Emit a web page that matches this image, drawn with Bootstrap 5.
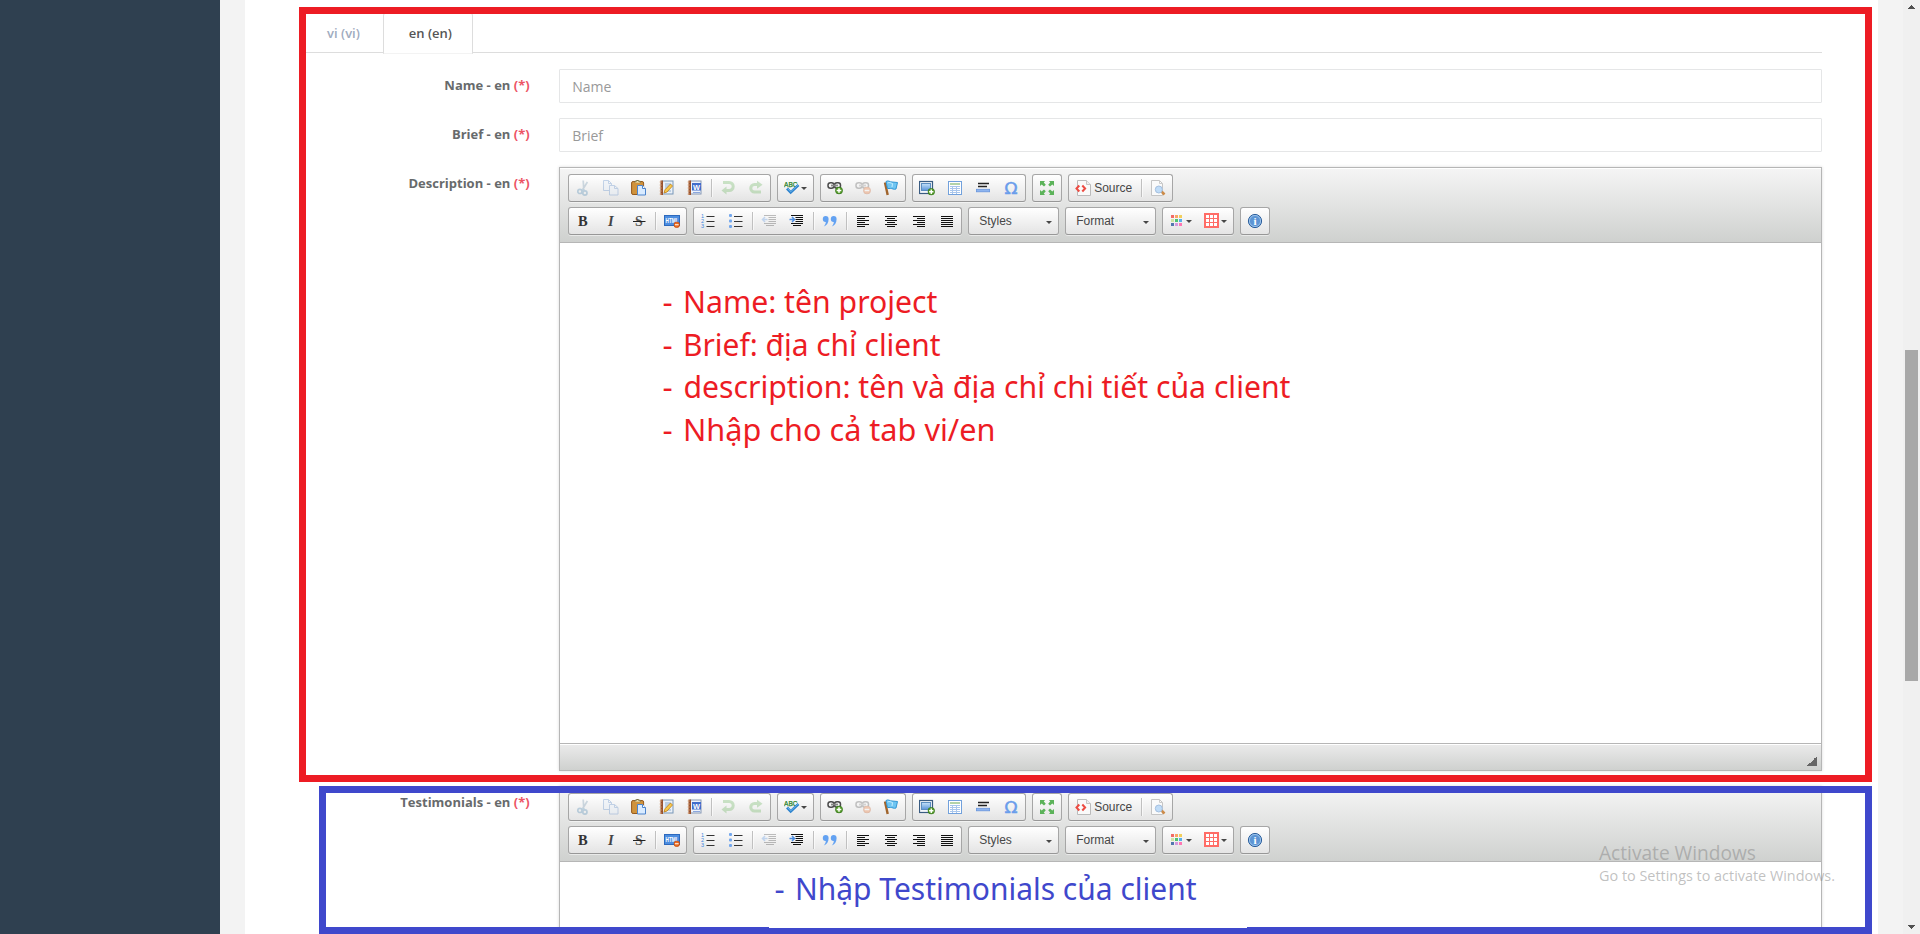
<!DOCTYPE html>
<html lang="vi">
<head>
<meta charset="utf-8">
<title>Project form</title>
<link href="https://cdn.jsdelivr.net/npm/bootstrap@5.3.0/dist/css/bootstrap.min.css" rel="stylesheet">
<style>
html{height:934px;overflow:hidden}
body{height:934px;overflow:hidden;background:#f3f3f3;font:13px/1.42857 "Open Sans",sans-serif;color:#676a6c}
.side{width:220px;background:#2f4050}
main{height:934px;overflow:hidden}
.panel-box{margin:0 25px;background:#fff;padding:12px 41px 0 40.6px;overflow:hidden}
.nav-tabs{height:41px;margin:0 15px;padding-left:.5px;border-bottom:1px solid #ddd}
.nav-tabs .nav-link{padding:10px 20px 10px 25px;margin-right:2px;margin-bottom:-1px;border:1px solid transparent;border-radius:4px 4px 0 0;font-weight:600;line-height:20px;color:#a0abc0}
.nav-tabs .nav-link.active{color:#555;background:#fff;border-color:#ddd #ddd #f3f3f3}
.form-rows{padding-top:16px}
.form-rows .row{--bs-gutter-x:30px;margin-left:0;margin-right:0;margin-bottom:15px}
.form-rows label{padding-top:7px;padding-right:14.500px;font-weight:700;text-align:right}
.req{color:#ed5565}
.form-control{height:34px;border:1px solid #e5e6e7;border-radius:1px;padding:6px 12px;font-size:14px;line-height:20px}
.form-control::placeholder{color:#999}
.editor{border:1px solid #b6b6b6;box-shadow:0 0 3px rgba(0,0,0,.15);background:#fff}
.ed-top{height:75px;padding:6px 0 0 8px;border-bottom:1px solid #b6b6b6;background:linear-gradient(#f5f5f5,#cfd1cf);box-shadow:0 1px 0 #fff inset}
.ed-row{gap:6px;margin-bottom:5px}
.grp{height:28px;border:1px solid #a6a6a6;border-bottom-color:#979797;border-radius:3px;background:linear-gradient(#fff,#e4e4e4);box-shadow:0 1px 0 rgba(255,255,255,.5),0 0 2px rgba(255,255,255,.15) inset;font:12px/18px "Liberation Sans",Arial,sans-serif;color:#474747}
.tb{height:26px;padding:4px 6px;color:#474747}
.tb svg{width:16px;height:16px;margin-top:1px;flex:none}
.tb.off svg{opacity:.3}
.tb span{margin-left:3px;width:39px}
.sep{width:1px;height:18px;margin:4px 2px 0;background:#c0c0c0;box-shadow:1px 0 0 rgba(255,255,255,.6)}
.caret{width:0;height:0;border:3px solid transparent;border-top-color:#474747;border-bottom:0;margin:8px 0 0 1px}
.combo{width:91px;padding:4px 6px 0 10px}
.combo .caret{margin:9px 0 0 auto}
.ed-body{height:500px}
.ed-body.cut-off{height:90px}
.ed-foot{height:27px;border-top:1px solid #b6b6b6;background:linear-gradient(#ebebeb,#cfd1cf);box-shadow:0 1px 0 #fff inset}
.grip{width:10px;height:10px;margin:0 4px 4px 0;background:linear-gradient(135deg,transparent 50%,#666 50%)}
.scrollcol{width:17px;height:934px;background:#f0f0f0;padding:5px 2px}
.thumb{height:331px;margin-top:341px;width:13px;background:#a8a8a8}
.mark-red,.mark-blue{position:absolute;border:7px solid #ed1c24}
.mark-red{left:299px;top:7px;width:1573px;height:775px}
.mark-blue{left:319px;top:786px;width:1553px;height:148px;border-color:#3f48cc}
.patch{position:absolute;left:769px;top:926px;width:478px;height:2px;background:#fff}
.notes{position:absolute;left:0;top:0;font-family:"Noto Sans","Open Sans",sans-serif;pointer-events:none}
</style>
</head>
<body class="d-flex position-relative">
<svg width="0" height="0" class="position-absolute">
<defs>
<linearGradient id="gb" x2="0" y2="1"><stop stop-color="#c5e2fb"/><stop offset="1" stop-color="#5b94d8"/></linearGradient>
<symbol id="cut" viewBox="0 0 16 16"><g fill="none" stroke="#3f7fae" transform="translate(.7)"><path d="M7.5.5 8 8.5M11.7 2 7 9.5" stroke="#6a8da8" stroke-width="1.7"/><circle cx="4.2" cy="11.4" r="2.1" stroke-width="1.7"/><circle cx="9.2" cy="13" r="2.1" stroke-width="1.7"/><path d="M6 10.3 9 9.8" stroke-width="1.5"/></g></symbol>
<symbol id="copy" viewBox="0 0 16 16"><g fill="#e3eefb" stroke="#4a7fc4"><path d="M.5.5h5l3 3v7h-8zM5.5.5v3h3"/><path d="M6.500 5.500h5l3.500 3v6.500H6.500zM11.500 5.500v3H15"/></g></symbol>
<symbol id="paste" viewBox="0 0 16 16"><rect x=".6" y="1.500" width="12" height="13" rx="1.500" fill="#d0933c" stroke="#94591c"/><path d="M4 2.500V1.200h1.500V.5h2v.7H9.200v1.600" fill="#eee6b5" stroke="#777145"/><path d="M6.500 5.500h5l3 3V15h-8z" fill="#d9ebff" stroke="#4c84cd"/><path d="M11.500 5.500v3h3" fill="#fff" stroke="#4c84cd"/></symbol>
<symbol id="ptext" viewBox="0 0 16 16"><rect x="3.500" y="1" width="10.500" height="13" fill="#eaf0f7" stroke="#7897b8"/><path d="M6 4h6M6 6h6M6 8h4M6 11h6" stroke="#8eaed0"/><path d="M1.500.5h2.500v14.500H1.500z" fill="#98522f"/><path d="M.7 2h2M.7 5h2M.7 8h2M.7 11h2M.7 14h2" stroke="#d79d70"/><path d="m5 13 1-3.200L11.500 4l2 2L8 12z" fill="#f8ca4b" stroke="#bd7b17" stroke-width=".8"/></symbol>
<symbol id="pword" viewBox="0 0 16 16"><rect x="3.500" y="1" width="10.500" height="13" fill="#eef3fb" stroke="#8698b5"/><path d="M1.500.5h2.500v14.500H1.500z" fill="#98522f"/><path d="M.7 2h2M.7 5h2M.7 8h2M.7 11h2M.7 14h2" stroke="#d79d70"/><rect x="5" y="3" width="9" height="7.500" fill="#416dcb"/><text x="6" y="9.500" font-family="Liberation Sans" font-weight="700" font-size="7.500" textLength="7" lengthAdjust="spacingAndGlyphs" fill="#fff">W</text><path d="M6 12.500h7" stroke="#8ba6dd"/></symbol>
<symbol id="undo" viewBox="0 0 16 16"><path d="M3 2.500h6.200a3.400 3.400 0 1 1 0 8H5" fill="none" stroke="#60b052" stroke-width="3"/><path d="M6.500 6.500v8L1.500 10.500z" fill="#60b052"/></symbol>
<symbol id="redo" viewBox="0 0 16 16"><path d="M13 12H6.500a3.700 3.700 0 0 1 0-7.500H10" fill="none" stroke="#60b052" stroke-width="3"/><path d="M9 .7v8l5.500-4z" fill="#60b052"/></symbol>
<symbol id="spell" viewBox="0 0 16 16"><text x="0" y="6.500" font-family="Liberation Sans" font-size="7" textLength="13.500" lengthAdjust="spacingAndGlyphs" fill="#258127" stroke="#258127" stroke-width=".25">ABC</text><path d="m3 8.500 3.700 4L14.500 5" fill="none" stroke="#2e83ce" stroke-width="2.600"/><path d="m3.500 8.500 3.200 3.300L14 5" fill="none" stroke="#75bdf0" stroke-width=".8"/></symbol>
<symbol id="chain" viewBox="0 0 16 16"><g fill="none" stroke="#4b4b4b" stroke-width="1.500"><rect x="1" y="2.800" width="6" height="5.500" rx="2.500"/><rect x="7.500" y="2.800" width="6" height="5.500" rx="2.500"/><path d="M4 5.500h7" stroke="#888" stroke-width="1.800"/></g></symbol>
<symbol id="plus" viewBox="0 0 8 8"><circle cx="4" cy="4" r="3.500" fill="#5b9f2e" stroke="#33761b" stroke-width=".8"/><path d="M4 1.700v4.600M1.700 4h4.600" stroke="#fff" stroke-width="1.500"/></symbol>
<symbol id="minus" viewBox="0 0 8 8"><circle cx="4" cy="4" r="3.500" fill="#ed6b20" stroke="#b74209" stroke-width=".8"/><path d="M1.700 4h4.600" stroke="#fff" stroke-width="1.500"/></symbol>
<symbol id="link" viewBox="0 0 16 16"><use href="#chain" width="16" height="16"/><use href="#plus" x="8" y="6.500" width="8" height="8"/></symbol>
<symbol id="unlink" viewBox="0 0 16 16"><use href="#chain" width="16" height="16"/><use href="#minus" x="8" y="6.500" width="8" height="8"/></symbol>
<symbol id="flag" viewBox="0 0 16 16"><path d="M2 2.500 4.700 15" stroke="#a0642c" stroke-width="2.400"/><path d="M3 1.500c2-1.500 4 .5 6 .5l5.500.5L13 9c-2 1-4-.8-5.500-.5L4.500 8.500z" fill="#6fc5f2" stroke="#3397d4"/><path d="M4.500 3c2-1 3 0 5 .5L9 7" fill="none" stroke="#c7efff"/></symbol>
<symbol id="image" viewBox="0 0 16 16"><rect x=".5" y="1.500" width="13" height="12" fill="#f3f7fb" stroke="#3a5c82" stroke-width="1.200"/><rect x="2.500" y="3.500" width="9" height="7" fill="url(#gb)" stroke="#5c8dbf"/><use href="#plus" x="8.500" y="8" width="7.500" height="7.500"/></symbol>
<symbol id="table" viewBox="0 0 16 16"><rect x="1.500" y="1.500" width="13" height="13" fill="#fff" stroke="#72a1dc"/><path d="M3 4h10" stroke="#9ac58d" stroke-width="1.500"/><path d="M3 6.500h10M3 8.500h10M3 10.500h10M3 12.500h10M5.500 6v8M9.500 6v8" stroke="#a9c6ec"/></symbol>
<symbol id="hr" viewBox="0 0 16 16"><path d="M3 3.500h11M3 6.500h9" stroke="#222" stroke-width="1.300"/><rect x="1.400" y="9.300" width="13.200" height="2.500" fill="#8db4ef" stroke="#6895dc" stroke-width=".8"/></symbol>
<symbol id="omega" viewBox="0 0 16 16"><text x="1.500" y="13.500" font-family="DejaVu Sans" font-size="16" textLength="13" lengthAdjust="spacingAndGlyphs" fill="#6a9deb" stroke="#6a9deb" stroke-width=".5">Ω</text></symbol>
<symbol id="max" viewBox="0 0 16 16"><g fill="#5cb35a"><path d="M1 1h5L4.800 2.600 6.800 4.700 5 6.500 2.700 4.600 1 6zM15 1h-5l1.200 1.600-2 2.100L11 6.500l2.300-1.900L15 6zM1 15h5l-1.200-1.600 2-2.100L5 9.500l-2.300 1.900L1 10zM15 15h-5l1.200-1.600-2-2.100L11 9.500l2.300 1.900L15 10z"/></g></symbol>
<symbol id="source" viewBox="0 0 16 16"><path d="M2.500.5h9l4 4v11h-13z" fill="#fafafa" stroke="#bbb"/><path d="M11.500.5v4h4" fill="#eee" stroke="#c5c5c5"/><path d="M4.300 5.500 1.500 8.500l2.800 3M7.300 5.500l2.800 3-2.800 3" fill="none" stroke="#ed4b42" stroke-width="2"/></symbol>
<symbol id="preview" viewBox="0 0 16 16"><path d="M1.500.5h8l3 3v12h-11z" fill="#fafafa" stroke="#c5c5c5"/><path d="M9.500.5v3h3" fill="none" stroke="#ccc"/><path d="m11.500 11.500 3 3" stroke="#cd8b48" stroke-width="2.500"/><circle cx="8.800" cy="9.500" r="3.500" fill="#c0dcf7" stroke="#a4bfdf"/></symbol>
<symbol id="bold" viewBox="0 0 16 16"><text x="3" y="13" font-family="Liberation Serif" font-weight="700" font-size="14.500" fill="#333">B</text></symbol>
<symbol id="italic" viewBox="0 0 16 16"><text x="5" y="13" font-family="Liberation Serif" font-weight="700" font-style="italic" font-size="14.500" fill="#444">I</text></symbol>
<symbol id="strike" viewBox="0 0 16 16"><text x="4" y="13" font-family="Liberation Serif" font-weight="700" font-size="14" fill="#555">S</text><path d="M2 8.500h12.500" stroke="#222"/></symbol>
<symbol id="clean" viewBox="0 0 16 16"><rect x=".5" y="2.500" width="15" height="10" fill="#4c8de0" stroke="#2d69bd"/><text x="1.500" y="9.800" font-family="Liberation Sans" font-weight="700" font-size="6.500" textLength="13" lengthAdjust="spacingAndGlyphs" fill="#fff">HTML</text><use href="#minus" x="9.500" y="8.500" width="6.500" height="6.500"/></symbol>
<symbol id="ol" viewBox="0 0 16 16"><g font-family="Liberation Sans" font-size="5.500" fill="#3e86dd"><text x="1" y="5">1</text><text x="1" y="10">2</text><text x="1" y="15">3</text></g><path d="M6.500 3.500h8M6.500 8.500h8M6.500 13.500h8" stroke="#333"/></symbol>
<symbol id="ul" viewBox="0 0 16 16"><g fill="#73a7ed"><rect x="1" y="1" width="3" height="3" rx="1"/><rect x="1" y="6.500" width="3" height="3" rx="1"/><rect x="1" y="12" width="3" height="3" rx="1"/></g><path d="M6 3.500h8.500M6 8.500h8.500M6 13.500h8.500" stroke="#333"/></symbol>
<symbol id="out" viewBox="0 0 16 16"><path d="M3 2.500h12M7.500 4.500h7.500M7.500 6.500h7.500M7.500 8.500h7.500M3 10.500h12M5 12.500h8" stroke="#333"/><path d="M1.500 6.500h5M4 4 1.500 6.500 4 9" fill="none" stroke="#4e8ee1" stroke-width="1.500"/></symbol>
<symbol id="ind" viewBox="0 0 16 16"><path d="M2 2.500h12M6.500 4.500H14M6.500 6.500H14M6.500 8.500H14M2 10.500h12M4 12.500h8" stroke="#111"/><path d="M.5 6.500h5M3 4l2.500 2.500L3 9" fill="none" stroke="#4e8ee1" stroke-width="1.500"/></symbol>
<symbol id="quote" viewBox="0 0 16 16"><g fill="#63a2f2"><path id="q" d="M.8 6a2.800 2.800 0 0 1 5.800 0c0 4-2 6.500-4.800 7.500 1.500-2 2-3 2-4.500A2.900 2.900 0 0 1 .8 6z"/><use href="#q" x="8"/></g></symbol>
<symbol id="al" viewBox="0 0 16 16"><path d="M2 3.500h12M2 5.500h8M2 7.500h12M2 9.500h8M2 11.500h12M2 13.500h8" stroke="#111"/></symbol>
<symbol id="ac" viewBox="0 0 16 16"><path d="M2 3.500h12M4 5.500h8M2 7.500h12M4 9.500h8M2 11.500h12M4 13.500h8" stroke="#111"/></symbol>
<symbol id="ar" viewBox="0 0 16 16"><path d="M2 3.500h12M6 5.500h8M2 7.500h12M6 9.500h8M2 11.500h12M6 13.500h8" stroke="#111"/></symbol>
<symbol id="aj" viewBox="0 0 16 16"><path d="M2 3.500h12M2 5.500h12M2 7.500h12M2 9.500h12M2 11.500h12M2 13.500h12" stroke="#111"/></symbol>
<symbol id="colors" viewBox="0 0 16 16"><path fill="#f26b66" d="M2 2h3v3H2z"/><path fill="#f9a667" d="M6 2h3v3H6z"/><path fill="#f2cf5b" d="M10 2h3v3h-3z"/><path fill="#cde4a4" d="M2 6h3v3H2z"/><path fill="#4ec473" d="M6 6h3v3H6z"/><path fill="#58aeea" d="M10 6h3v3h-3z"/><path fill="#5377ae" d="M2 10h3v3H2z"/><path fill="#d39adf" d="M6 10h3v3H6z"/><path fill="#ff77b3" d="M10 10h3v3h-3z"/></symbol>
<symbol id="bg" viewBox="0 0 16 16"><path fill="#ff6c66" d="M0 0h15v15H0z"/><path fill="#fff" d="M2 2h3v3H2zM6 2h3v3H6zM10 2h3v3h-3zM2 6h3v3H2zM6 6h3v3H6zM10 6h3v3h-3zM2 10h3v3H2zM6 10h3v3H6zM10 10h3v3h-3z"/></symbol>
<symbol id="about" viewBox="0 0 16 16"><circle cx="8" cy="8" r="6.600" fill="#5d95d4" stroke="#2c5e9b"/><circle cx="8" cy="8" r="5.600" fill="none" stroke="#a9cdf0" stroke-width=".8"/><text x="8" y="12" text-anchor="middle" font-family="Liberation Serif" font-weight="700" font-size="11" fill="#fff">i</text></symbol>
</defs>
</svg>

<aside class="side flex-shrink-0"></aside>
<main class="flex-grow-1 d-flex">
  <div class="panel-box flex-grow-1">
    <ul class="nav nav-tabs">
      <li class="nav-item"><a class="nav-link">vi (vi)</a></li>
      <li class="nav-item"><a class="nav-link active">en (en)</a></li>
    </ul>
    <form class="form-rows">
      <div class="row"><label class="col-2">Name - en <span class="req">(*)</span></label><div class="col-10"><input class="form-control" placeholder="Name"></div></div>
      <div class="row"><label class="col-2">Brief - en <span class="req">(*)</span></label><div class="col-10"><input class="form-control" placeholder="Brief"></div></div>
      <div class="row"><label class="col-2">Description - en <span class="req">(*)</span></label><div class="col-10"><div class="editor"><div class="ed-top"></div><div class="ed-body"></div><div class="ed-foot d-flex justify-content-end align-items-end"><div class="grip"></div></div></div></div></div>
      <div class="row mb-0"><label class="col-2">Testimonials - en <span class="req">(*)</span></label><div class="col-10"><div class="editor border-bottom-0"><div class="ed-top"></div><div class="ed-body cut-off"></div></div></div></div>
    </form>
  </div>
</main>
<div class="scrollcol flex-shrink-0 d-flex flex-column align-items-center">
  <svg width="7" height="4" class="flex-shrink-0"><path d="M0 4V3h1V2h1V1h1V0h1v1h1v1h1v1h1v1z" fill="#505050"/></svg>
  <div class="thumb flex-shrink-0"></div>
  <svg width="7" height="4" class="mt-auto flex-shrink-0"><path d="M0 0v1h1v1h1v1h1v1h1V3h1V2h1V1h1V0z" fill="#505050"/></svg>
</div>

<div class="mark-red"></div>
<div class="mark-blue"></div>
<div class="patch"></div>
<svg class="notes" width="1920" height="934">
  <g font-size="31.500" fill="#ed1c24">
    <text y="313"><tspan x="662.500">- </tspan><tspan x="683" textLength="254.500" lengthAdjust="spacingAndGlyphs">Name: tên project</tspan></text>
    <text y="355.500"><tspan x="662.500">- </tspan><tspan x="683" textLength="257.500" lengthAdjust="spacingAndGlyphs">Brief: địa chỉ client</tspan></text>
    <text y="398"><tspan x="662.500">- </tspan><tspan x="683.500" textLength="607" lengthAdjust="spacingAndGlyphs">description: tên và địa chỉ chi tiết của client</tspan></text>
    <text y="440.500"><tspan x="662.500">- </tspan><tspan x="683" textLength="312.500" lengthAdjust="spacingAndGlyphs">Nhập cho cả tab vi/en</tspan></text>
  </g>
  <text y="900" font-size="31.500" fill="#3f48cc"><tspan x="774.500">- </tspan><tspan x="795" textLength="401.500" lengthAdjust="spacingAndGlyphs">Nhập Testimonials của client</tspan></text>
  <g fill="#8c8c8c" fill-opacity=".55" font-family="Open Sans">
    <text x="1599" y="860" font-size="19.500" textLength="157" lengthAdjust="spacingAndGlyphs">Activate Windows</text>
    <text x="1599" y="881" font-size="14.500" textLength="236" lengthAdjust="spacingAndGlyphs">Go to Settings to activate Windows.</text>
  </g>
</svg>

<script src="https://cdn.jsdelivr.net/npm/bootstrap@5.3.0/dist/js/bootstrap.bundle.min.js"></script>
<script>
// "-" before a name: disabled; "+" after: dropdown caret; "|": separator; "@": combo box
const rows = [
  ['-cut -copy paste ptext pword | -undo -redo', 'spell+', 'link -unlink flag', 'image table hr omega', 'max', 'source | preview'],
  ['bold italic strike | clean', 'ol ul | -out ind | quote | al ac ar aj', '@Styles', '@Format', 'colors+ bg+', 'about']
];
const button = t => {
  if (t === '|') return '<i class="sep"></i>';
  const id = t.replace(/[-+]/g, '');
  return `<a class="tb d-flex text-decoration-none ${t[0] === '-' ? 'off' : ''}"><svg><use href="#${id}"/></svg>` +
    (id === 'source' ? '<span>Source</span>' : '') + (t.endsWith('+') ? '<i class="caret"></i>' : '') + '</a>';
};
const group = g => g[0] === '@'
  ? `<div class="grp combo d-flex">${g.slice(1)}<i class="caret"></i></div>`
  : `<div class="grp d-flex">${g.split(' ').map(button).join('')}</div>`;
document.querySelectorAll('.ed-top').forEach(el => {
  el.innerHTML = rows.map(r => `<div class="ed-row d-flex">${r.map(group).join('')}</div>`).join('');
});
</script>
</body>
</html>
